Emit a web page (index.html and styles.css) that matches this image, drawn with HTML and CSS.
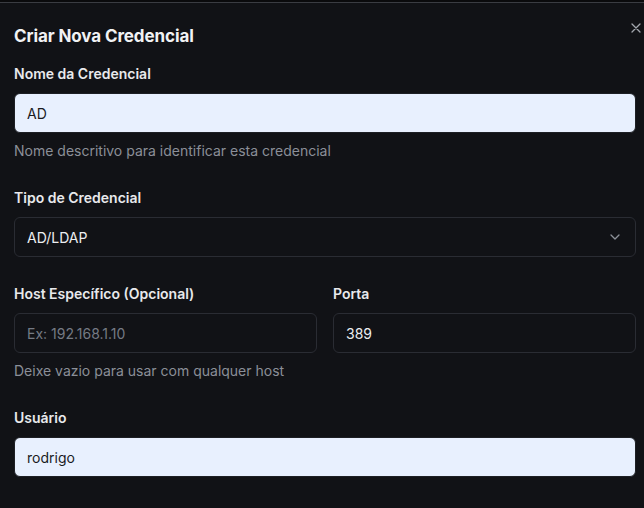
FILE: index.html
```html
<!DOCTYPE html>
<html lang="pt-BR">
<head>
<meta charset="utf-8">
<title>Criar Nova Credencial</title>
<link rel="stylesheet" href="styles.css">
</head>
<body>
<div class="dialog">
  <button class="close" type="button" aria-label="Fechar">
    <svg width="10" height="10" viewBox="0 0 10 10"><path d="M1 1L9 9M9 1L1 9" stroke="currentColor" stroke-width="1.3" stroke-linecap="round"/></svg>
  </button>
  <h2 class="title">Criar Nova Credencial</h2>
  <div class="form">
    <div class="field">
      <label class="label">Nome da Credencial</label>
      <div class="input filled">AD</div>
      <p class="hint">Nome descritivo para identificar esta credencial</p>
    </div>
    <div class="field">
      <label class="label">Tipo de Credencial</label>
      <div class="input select">
        <span>AD/LDAP</span>
        <svg class="chev" width="10" height="6" viewBox="0 0 10 6"><path d="M1 1L5 5L9 1" fill="none" stroke="currentColor" stroke-width="1.3" stroke-linecap="round" stroke-linejoin="round"/></svg>
      </div>
    </div>
    <div class="field">
      <div class="row">
        <div class="col">
          <label class="label">Host Específico (Opcional)</label>
          <div class="input placeholder">Ex: 192.168.1.10</div>
        </div>
        <div class="col">
          <label class="label">Porta</label>
          <div class="input">389</div>
        </div>
      </div>
      <p class="hint">Deixe vazio para usar com qualquer host</p>
    </div>
    <div class="field">
      <label class="label">Usuário</label>
      <div class="input filled">rodrigo</div>
    </div>
  </div>
</div>
</body>
</html>
```
FILE: styles.css
```css
* { box-sizing: border-box; }
html, body { margin: 0; padding: 0; background: #111216; }
body {
  font-family: Inter, "Noto Sans", sans-serif;
  color: #e6e7ea;
  border-top: 2px solid #0a0a0c;
  height: 508px;
  overflow: hidden;
}
.dialog {
  position: relative;
  border-top: 1px solid #3a3c42;
  padding: 21px 8px 0 14px;
}
.close {
  position: absolute;
  top: 18px;
  right: 1px;
  background: none;
  border: 0;
  padding: 2px;
  color: #a3a6ad;
  display: flex;
}
.title {
  margin: 0;
  font-size: 17px;
  line-height: 24px;
  font-weight: 700;
  color: #f1f2f4;
  letter-spacing: -0.1px;
}
.form {
  display: flex;
  flex-direction: column;
  gap: 27px;
  margin-top: 16px;
}
.field { display: flex; flex-direction: column; }
.label {
  display: block;
  font-size: 14px;
  line-height: 20px;
  font-weight: 600;
  color: #e8e9ec;
  margin-bottom: 9px;
}
.input {
  height: 40px;
  border: 1px solid #2a2c33;
  border-radius: 6px;
  padding: 0 12px;
  display: flex;
  align-items: center;
  font-size: 14px;
  color: #eceef1;
  background: #111216;
}
.input.filled {
  background: #e8f0fe;
  color: #1a1b1f;
  border-color: #1d1f24;
}
.input.placeholder { color: #757a84; }
.select { justify-content: space-between; }
.chev { color: #8d9199; margin-right: 3px; }
.hint {
  margin: 8px 0 0;
  font-size: 14px;
  line-height: 20px;
  color: #8b8f98;
}
.row {
  display: grid;
  grid-template-columns: 1fr 1fr;
  gap: 16px;
}
.col { display: flex; flex-direction: column; }
```
